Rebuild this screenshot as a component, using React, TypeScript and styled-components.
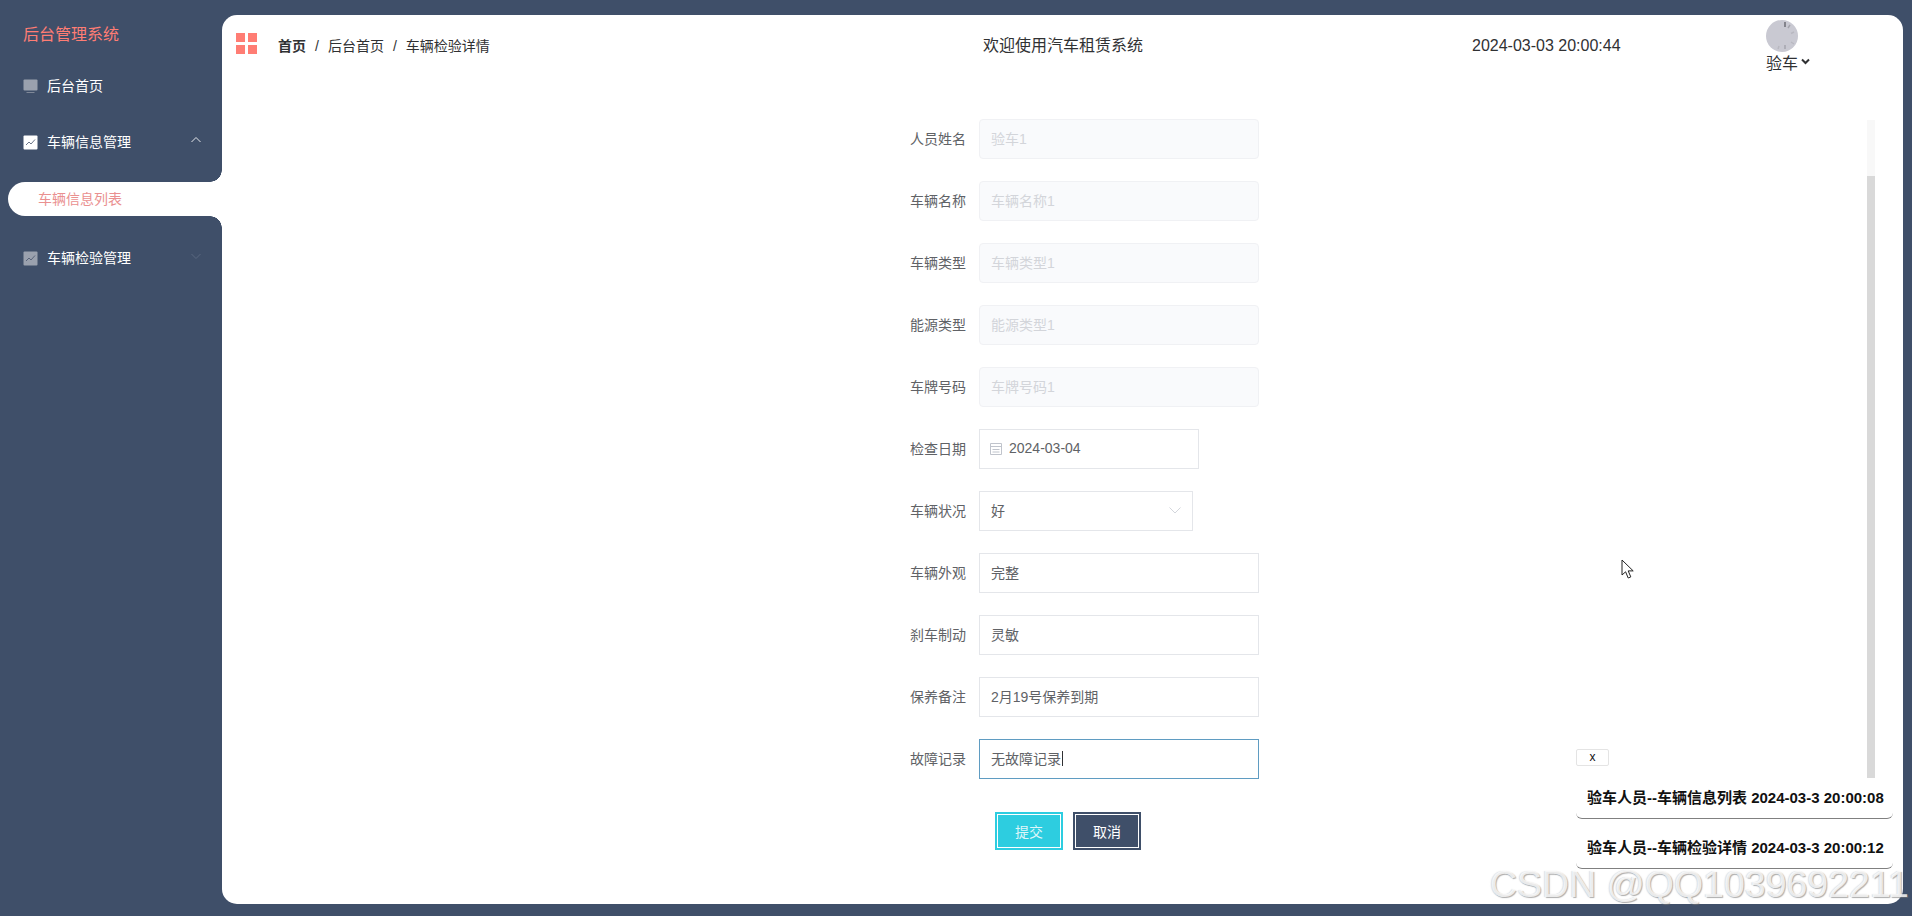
import styled, { createGlobalStyle } from "styled-components";

const DARK = "#3f4f69";
const CORAL = "#ff7d74";
const FONT = `"Liberation Sans", "Noto Sans CJK SC", sans-serif`;

const GlobalStyle = createGlobalStyle`
  html, body {
    margin: 0;
    padding: 0;
    height: 100%;
    overflow: hidden;
    background: ${DARK};
    font-family: ${FONT};
  }
`;

const Page = styled.div`
  position: relative;
  display: flex;
  height: 916px;
  box-sizing: border-box;
  padding: 15px 9px 12px 0;
  background: ${DARK};
`;

const Sidebar = styled.aside`
  width: 222px;
  flex: none;
  margin: -15px 0 -12px;
  display: flex;
  flex-direction: column;
`;

const Title = styled.div`
  height: 47px;
  padding: 11px 0 0 23px;
  line-height: 47px;
  font-size: 16px;
  color: ${CORAL};
`;

const MenuGroup = styled.div<{ $corner: "top" | "bottom" }>`
  position: relative;
  padding: ${({ $corner }) => ($corner === "top" ? "14px 0 0" : "0 0 12px")};
  &::after {
    content: "";
    position: absolute;
    right: 0;
    width: 12px;
    height: 12px;
    ${({ $corner }) =>
      $corner === "top"
        ? `top: 0; background: radial-gradient(circle at 0 100%, ${DARK} 11.5px, #fff 12px);`
        : `bottom: 0; background: radial-gradient(circle at 0 0, ${DARK} 11.5px, #fff 12px);`}
  }
`;

const MenuItem = styled.div`
  height: 56px;
  display: flex;
  align-items: center;
  padding: 0 20px 0 23px;
  font-size: 14px;
  color: #fff;
`;

const MenuIcon = styled.svg`
  width: 15px;
  height: 15px;
  margin-right: 9px;
  flex: none;
`;

const MenuLabel = styled.span`
  flex: 1;
  padding-bottom: 2px;
`;

const MenuChevron = styled.svg`
  width: 12px;
  height: 12px;
  margin-top: -5px;
`;

const SubItemRow = styled.div`
  height: 34px;
  padding-left: 8px;
`;

const SubItem = styled.div`
  height: 34px;
  line-height: 34px;
  padding-left: 30px;
  border-radius: 17px 0 0 17px;
  background: #fff;
  font-size: 14px;
  color: #ea9090;
`;

const Main = styled.main`
  position: relative;
  flex: 1;
  display: flex;
  flex-direction: column;
  background: #fff;
  border-radius: 15px;
  min-width: 0;
`;

const Header = styled.header`
  height: 104px;
  flex: none;
  display: flex;
  align-items: flex-start;
  padding-left: 14px;
`;

const Logo = styled.div`
  width: 21px;
  height: 21px;
  margin: 18px 21px 0 0;
  display: grid;
  grid-template-columns: 9px 9px;
  grid-template-rows: 9px 9px;
  gap: 3px;
`;

const LogoCell = styled.span`
  background: ${CORAL};
`;

const Breadcrumb = styled.nav`
  width: 230px;
  margin-top: 22px;
  display: flex;
  font-size: 14px;
  line-height: 18px;
  color: #303133;
  white-space: nowrap;
`;

const Crumb = styled.span<{ $bold?: boolean }>`
  font-weight: ${({ $bold }) => ($bold ? 700 : 400)};
`;

const CrumbSlash = styled.span`
  margin: 0 9px;
  color: #303133;
`;

const Welcome = styled.div`
  width: 489px;
  margin: 21px 0 0 475px;
  font-size: 16px;
  line-height: 20px;
  color: #303133;
`;

const Clock = styled.div`
  width: 294px;
  margin-top: 21px;
  font-size: 16px;
  line-height: 20px;
  color: #303133;
`;

const UserBox = styled.div`
  margin-top: 5px;
`;

const Avatar = styled.svg`
  display: block;
  width: 32px;
  height: 32px;
`;

const UserName = styled.div`
  display: flex;
  align-items: flex-start;
  margin-top: 2px;
  font-size: 16px;
  line-height: 20px;
  color: #303133;
`;

const Caret = styled.svg`
  width: 9px;
  height: 9px;
  margin: 3px 0 0 3px;
`;

const Body = styled.div`
  flex: 1;
  display: flex;
  min-height: 0;
`;

const Form = styled.form`
  flex: 1;
  margin-left: 657px;
`;

const Row = styled.div`
  display: flex;
  align-items: center;
  height: 40px;
  margin-bottom: 22px;
`;

const Label = styled.label`
  width: 100px;
  padding: 0 13px 2px 0;
  box-sizing: border-box;
  text-align: right;
  font-size: 14px;
  color: #606266;
  flex: none;
`;

const Field = styled.div<{ $disabled?: boolean; $focused?: boolean; $width?: number }>`
  width: ${({ $width }) => $width ?? 280}px;
  height: 40px;
  box-sizing: border-box;
  display: flex;
  align-items: center;
  padding: 0 11px 2px;
  font-size: 14px;
  border: 1px solid
    ${({ $disabled, $focused }) =>
      $focused ? "#5f9cc2" : $disabled ? "#f0f1f4" : "#e4e6ea"};
  border-radius: ${({ $disabled }) => ($disabled ? 4 : 0)}px;
  background: ${({ $disabled }) => ($disabled ? "#f9fafc" : "#fff")};
  color: ${({ $disabled }) => ($disabled ? "#d3d5da" : "#606266")};
`;

const FieldText = styled.span`
  flex: 1;
`;

const Cursor = styled.span`
  display: inline-block;
  width: 1px;
  height: 15px;
  margin-left: 1px;
  vertical-align: -2px;
  background: #303133;
`;

const FieldIcon = styled.svg`
  width: 14px;
  height: 14px;
  margin: 2px 6px 0 -2px;
  flex: none;
`;

const SelectArrow = styled.svg`
  width: 14px;
  height: 14px;
  flex: none;
  margin-right: -1px;
`;

const Actions = styled.div`
  display: flex;
  gap: 10px;
  margin: 33px 0 0 116px;
`;

const Button = styled.button<{ $color: string; $text: string }>`
  width: 68px;
  height: 38px;
  padding: 0;
  box-sizing: border-box;
  border: 2px solid ${({ $color }) => $color};
  box-shadow: inset 0 0 0 1px #fff;
  background: ${({ $color }) => $color};
  color: ${({ $text }) => $text};
  font-family: ${FONT};
  font-size: 14px;
`;

const Scrollbar = styled.div`
  width: 8px;
  height: 658px;
  flex: none;
  margin: 1px 28px 0 0;
  padding-top: 56px;
  box-sizing: border-box;
  background: #f8f8f8;
`;

const ScrollThumb = styled.div`
  height: 100%;
  background: #d9d9d9;
`;

const LogPanel = styled.div`
  position: absolute;
  left: 1354px;
  top: 734px;
  width: 317px;
`;

const CloseButton = styled.button`
  display: block;
  width: 33px;
  height: 17px;
  padding: 0;
  margin-bottom: 4px;
  border: 1px solid #e4e4e4;
  border-radius: 2px;
  background: #fff;
  font-family: ${FONT};
  font-size: 12px;
  line-height: 13px;
  color: #111;
`;

const LogRow = styled.div`
  height: 49px;
  padding: 8px 0 0 11px;
  box-sizing: border-box;
  line-height: 40px;
  border-bottom: 1px solid #808080;
  border-radius: 0 0 6px 6px;
  margin-bottom: 1px;
  font-size: 15px;
  font-weight: 700;
  color: #111;
  white-space: nowrap;
`;

const Pointer = styled.svg`
  position: absolute;
  left: 1621px;
  top: 559px;
  width: 14px;
  height: 21px;
`;

const Watermark = styled.div`
  position: absolute;
  left: 1490px;
  top: 863px;
  font-family: "Liberation Sans", sans-serif;
  font-size: 37.5px;
  line-height: 42px;
  white-space: nowrap;
  color: rgba(255, 255, 255, 0.8);
  text-shadow: 1px 1px 1px rgba(120, 120, 120, 0.6), -1px 0 1px rgba(150, 150, 150, 0.3);
  pointer-events: none;
`;

const fields = [
  { label: "人员姓名", value: "验车1" },
  { label: "车辆名称", value: "车辆名称1" },
  { label: "车辆类型", value: "车辆类型1" },
  { label: "能源类型", value: "能源类型1" },
  { label: "车牌号码", value: "车牌号码1" },
];

const textFields = [
  { label: "车辆外观", value: "完整" },
  { label: "刹车制动", value: "灵敏" },
  { label: "保养备注", value: "2月19号保养到期" },
];

const ChartIcon = ({ tile, line }: { tile: string; line: string }) => (
  <MenuIcon viewBox="0 0 15 15">
    <rect x="0.5" y="0.5" width="14" height="14" rx="1" fill={tile} />
    <path d="M3 10l3-3 2 2 4-4.5" fill="none" stroke={line} strokeWidth="1" />
  </MenuIcon>
);

const Chevron = ({ up, color }: { up?: boolean; color: string }) => (
  <MenuChevron viewBox="0 0 12 12">
    <path
      d={up ? "M1.5 8L6 3.5 10.5 8" : "M1.5 4L6 8.5 10.5 4"}
      fill="none"
      stroke={color}
      strokeWidth="1"
    />
  </MenuChevron>
);

export default function App() {
  return (
    <Page>
      <GlobalStyle />
      <Sidebar>
        <Title>后台管理系统</Title>
        <MenuItem>
          <MenuIcon viewBox="0 0 15 15">
            <rect x="0.5" y="0.5" width="14" height="11" rx="1" fill="#9aa1ae" />
            <rect x="3.5" y="13" width="8" height="1" fill="#7f8898" />
          </MenuIcon>
          <MenuLabel>后台首页</MenuLabel>
        </MenuItem>
        <MenuGroup $corner="bottom">
          <MenuItem>
            <ChartIcon tile="#fff" line="#6b7689" />
            <MenuLabel>车辆信息管理</MenuLabel>
            <Chevron up color="#e6e8ec" />
          </MenuItem>
        </MenuGroup>
        <SubItemRow>
          <SubItem>车辆信息列表</SubItem>
        </SubItemRow>
        <MenuGroup $corner="top">
          <MenuItem>
            <ChartIcon tile="#9aa1ae" line="#59647a" />
            <MenuLabel>车辆检验管理</MenuLabel>
            <Chevron color="#5a6880" />
          </MenuItem>
        </MenuGroup>
      </Sidebar>

      <Main>
        <Header>
          <Logo>
            <LogoCell />
            <LogoCell />
            <LogoCell />
            <LogoCell />
          </Logo>
          <Breadcrumb>
            <Crumb $bold>首页</Crumb>
            <CrumbSlash>/</CrumbSlash>
            <Crumb>后台首页</Crumb>
            <CrumbSlash>/</CrumbSlash>
            <Crumb>车辆检验详情</Crumb>
          </Breadcrumb>
          <Welcome>欢迎使用汽车租赁系统</Welcome>
          <Clock>2024-03-03 20:00:44</Clock>
          <UserBox>
            <Avatar viewBox="0 0 32 32">
              <circle cx="16" cy="16" r="16" fill="#c9c9d2" />
              <g stroke="#a3a3ac" strokeWidth="1.4">
                <path d="M19 2v5" stroke="#66666e" />
                <path d="M24 5l-2 3" />
                <path d="M28 12l-3 1.5" stroke="#b8b8c0" />
                <path d="M28 24l-3-2" stroke="#b8b8c0" />
                <path d="M19 29v-4" />
                <path d="M12 29l1-3" stroke="#b8b8c0" />
              </g>
            </Avatar>
            <UserName>
              验车
              <Caret viewBox="0 0 9 9">
                <path d="M1 2.5L4.5 6 8 2.5" fill="none" stroke="#303133" strokeWidth="2" />
              </Caret>
            </UserName>
          </UserBox>
        </Header>

        <Body>
          <Form>
            {fields.map((f) => (
              <Row key={f.label}>
                <Label>{f.label}</Label>
                <Field $disabled>{f.value}</Field>
              </Row>
            ))}
            <Row>
              <Label>检查日期</Label>
              <Field $width={220}>
                <FieldIcon viewBox="0 0 14 14">
                  <path
                    d="M1.5 1.5h11v11h-11zM1.5 4.5h11M3.5 7.5h7M3.5 10h7"
                    fill="none"
                    stroke="#c0c4cc"
                    strokeWidth="1"
                  />
                </FieldIcon>
                2024-03-04
              </Field>
            </Row>
            <Row>
              <Label>车辆状况</Label>
              <Field $width={214}>
                <FieldText>好</FieldText>
                <SelectArrow viewBox="0 0 14 14">
                  <path d="M1.5 4.5L7 10l5.5-5.5" fill="none" stroke="#d3d6dc" strokeWidth="1" />
                </SelectArrow>
              </Field>
            </Row>
            {textFields.map((f) => (
              <Row key={f.label}>
                <Label>{f.label}</Label>
                <Field>{f.value}</Field>
              </Row>
            ))}
            <Row>
              <Label>故障记录</Label>
              <Field $focused>
                <span>
                  无故障记录
                  <Cursor />
                </span>
              </Field>
            </Row>
            <Actions>
              <Button type="button" $color="#2dcde0" $text="#dff6f9">
                提交
              </Button>
              <Button type="button" $color="#3f4f69" $text="#fff">
                取消
              </Button>
            </Actions>
          </Form>
          <Scrollbar>
            <ScrollThumb />
          </Scrollbar>
        </Body>

        <LogPanel>
          <CloseButton type="button">x</CloseButton>
          <LogRow>验车人员--车辆信息列表 2024-03-3 20:00:08</LogRow>
          <LogRow>验车人员--车辆检验详情 2024-03-3 20:00:12</LogRow>
        </LogPanel>
      </Main>

      <Pointer viewBox="0 0 14 21">
        <path
          d="M1 1v15l3.6-3.2 2.6 6.2 2.6-1.1-2.6-6h5z"
          fill="#fff"
          stroke="#222"
          strokeWidth="1"
        />
      </Pointer>
      <Watermark>CSDN @QQ1039692211</Watermark>
    </Page>
  );
}
